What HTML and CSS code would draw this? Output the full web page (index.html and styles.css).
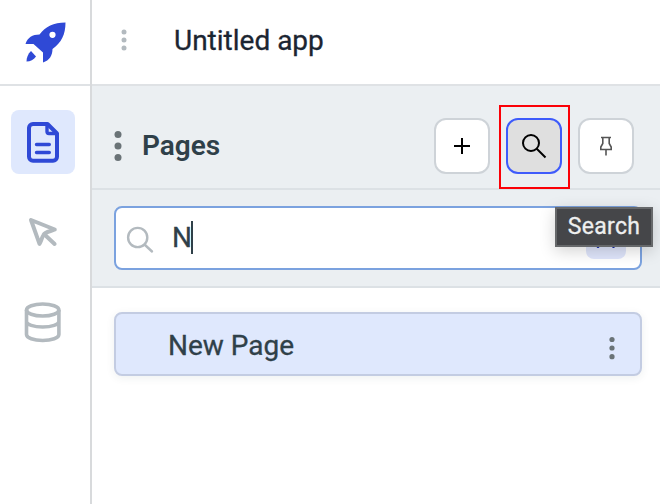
FILE: index.html
```
<!DOCTYPE html>
<html lang="en">
<head>
<meta charset="utf-8">
<title>Untitled app</title>
<link rel="stylesheet" href="styles.css">
</head>
<body>
<div class="app">
  <aside class="sidebar">
    <div class="logo">
      <svg width="42" height="42" viewBox="0.500 0.500 42 42"><path fill="#2f49d6" fill-rule="evenodd" d="M41 1C29 1 21 5 15 13C8 13 3 16 1 22.500H9L18.500 31V41C25 39 28 34 28 27.500C37 21 41 13 41 1ZM28 10.200a3.100 3.100 0 1 1 0 6.200a3.100 3.100 0 0 1 0-6.200Z"/><path fill="#2f49d6" d="M6.500 29.500L11.500 35C9 38.500 6 39.800 2 40C2 36 3.500 32.500 6.500 29.500Z"/></svg>
    </div>
    <nav class="nav">
      <button class="nav-item active" aria-label="Pages">
        <svg width="36" height="44" viewBox="0 0 36 44" fill="none" stroke="#2f49d6" stroke-width="4" stroke-linejoin="round" stroke-linecap="round"><path d="M8 4H22.500L32 13.500V36.700a4 4 0 0 1-4 4H8a4 4 0 0 1-4-4V8a4 4 0 0 1 4-4Z"/><path stroke-width="3.400" d="M22 5V11.500a2 2 0 0 0 2 2H31"/><path stroke-width="3.400" d="M11.500 24.500H24.300M11.500 32.500H24.300"/></svg>
      </button>
      <button class="nav-item" aria-label="Inspector">
        <svg width="36" height="36" viewBox="0 0 36 36" fill="none" stroke="#b3babf" stroke-width="4" stroke-linejoin="round" stroke-linecap="round"><path d="M6 6L29.800 15.500C25 17.500 20 18 18.500 21C16.500 24 16.500 27 14.500 29.800ZM19.500 20.500L29.600 30"/></svg>
      </button>
      <button class="nav-item" aria-label="Sources">
        <svg width="40" height="44" viewBox="0 0 40 44" fill="none" stroke="#b3babf" stroke-width="3.600"><ellipse cx="19.700" cy="10" rx="16.200" ry="6"/><path d="M3.500 10V34.500C3.500 38 10.700 40.500 19.700 40.500S35.900 38 35.900 34.500V10M3.500 21.500C3.500 24.500 10.700 27 19.700 27S35.900 24.500 35.900 21.500"/></svg>
      </button>
    </nav>
  </aside>
  <main class="main">
    <header class="topbar">
      <svg width="8" height="24" viewBox="0 0 8 24" fill="#b3babf"><circle cx="4" cy="4" r="2.500"/><circle cx="4" cy="12" r="2.500"/><circle cx="4" cy="20" r="2.500"/></svg>
      <span class="app-name">Untitled app</span>
    </header>
    <section class="panel-head">
      <svg width="8" height="32" viewBox="0 0 8 32" fill="#6a7377"><circle cx="4" cy="4.500" r="3.500"/><circle cx="4" cy="16" r="3.500"/><circle cx="4" cy="27.500" r="3.500"/></svg>
      <h1 class="panel-title">Pages</h1>
      <div class="actions">
        <button class="action" aria-label="Add"><svg width="16" height="16" viewBox="0 0 16 16" fill="none" stroke="#000" stroke-width="2"><path d="M8 0V16M0 8H16"/></svg></button>
        <div class="action-wrap">
          <button class="action selected" aria-label="Find"><svg width="26" height="26" viewBox="0 0 26 26" fill="none" stroke="#000" stroke-width="2"><circle cx="10" cy="10" r="8"/><path d="M15.500 15.500L24.500 24.500"/></svg></button>
          <div class="highlight"></div>
          <div class="tooltip">Search</div>
        </div>
        <button class="action" aria-label="Pin"><svg width="14" height="20" viewBox="0 0 14 20" fill="none" stroke="#555" stroke-width="1.600"><path d="M2 1.500H12M3.800 1.500V7.500L1.800 11V13.500H12.200V11L10.200 7.500V1.500M7 13.500V19.500"/></svg></button>
      </div>
    </section>
    <section class="search-row">
      <div class="search-box">
        <svg width="28" height="28" viewBox="0 0 28 28" fill="none" stroke="#b3babf" stroke-width="2.400" stroke-linecap="round"><circle cx="11.700" cy="11.500" r="9.600"/><path d="M18.500 18.500L26 25.500"/></svg>
        <span class="query">N</span><span class="caret"></span>
        <button class="clear" aria-label="Clear"><svg width="20" height="20" viewBox="0 0 20 20" fill="none" stroke="#1527a8" stroke-width="3" stroke-linecap="round"><path d="M2 2L17.500 17.500M17.500 2L2 17.500"/></svg></button>
      </div>
    </section>
    <section class="list">
      <div class="page-item">
        <span>New Page</span>
        <svg width="8" height="24" viewBox="0 0 8 24" fill="#6a7377"><circle cx="4" cy="3.500" r="2.600"/><circle cx="4" cy="12" r="2.600"/><circle cx="4" cy="20.700" r="2.600"/></svg>
      </div>
    </section>
  </main>
</div>
</body>
</html>
```
FILE: styles.css
```
* { box-sizing: border-box; }
body { margin: 0; font-family: Roboto, "Liberation Sans", sans-serif; font-size: 28px; color: #2f4049; background: #fff; }
button { padding: 0; border: 0; background: none; font: inherit; }
svg { display: block; flex: none; }
.app { display: flex; width: 660px; height: 504px; overflow: hidden; }
.sidebar { width: 92px; border-right: 2px solid #d8dadc; flex: none; }
.logo { height: 86px; padding: 22px 0 0 25px; border-bottom: 2px solid #dfe2e5; }
.nav { display: flex; flex-direction: column; gap: 26px; padding: 24px 0 0 11px; }
.nav-item { display: flex; align-items: center; justify-content: center; width: 64px; height: 64px; border-radius: 8px; }
.nav-item.active { background: #dfe8fd; }
.main { flex: 1; min-width: 0; }
.topbar { display: flex; align-items: center; height: 86px; padding: 0 28px 4px; border-bottom: 2px solid #dfe2e5; }
.app-name { margin-left: 46px; padding-top: 2px; color: #1b2532; line-height: 32px; -webkit-text-stroke: .3px; }
.panel-head { display: flex; align-items: center; height: 104px; padding: 18px 26px 0 22px; background: #ebeff2; border-bottom: 2px solid #dce1e5; }
.panel-title { margin: 0 0 0 20px; font-size: 28px; font-weight: 600; line-height: 32px; }
.actions { display: flex; gap: 16px; margin-left: auto; }
.action { display: flex; align-items: center; justify-content: center; width: 56px; height: 56px; border: 2px solid #ced3d8; border-radius: 12px; background: #fff; }
.action-wrap { position: relative; }
.action.selected { background: #dfdfdf; border-color: #3e5bfb; }
.highlight { position: absolute; left: -7px; top: -13px; width: 71px; height: 84px; border: 2px solid #fb0007; }
.tooltip { position: absolute; z-index: 2; left: 49px; top: 89px; width: 98px; height: 40px; border: 2px solid #66686a; background: #454649; color: #eeefef; font-size: 23px; line-height: 35px; letter-spacing: .3px; text-align: center; box-shadow: 0 4px 16px rgba(0,0,0,.18); -webkit-text-stroke: .3px; }
.search-row { height: 98px; padding: 16px 18px 0 22px; background: #ebeff2; border-bottom: 2px solid #dce1e5; }
.search-box { display: flex; align-items: center; height: 64px; padding: 4px 14px 0 10px; border: 2px solid #7ba2df; border-radius: 8px; background: #fff; }
.query { margin-left: 18px; line-height: 32px; padding-bottom: 5px; -webkit-text-stroke: .3px; }
.caret { width: 2px; height: 33px; margin: 0 0 5px -1px; background: #2f4049; }
.clear { display: flex; align-items: center; justify-content: center; width: 40px; height: 40px; margin-left: auto; margin-bottom: 3px; border-radius: 8px; background: #dfe5fb; }
.list { padding: 24px 18px 0 22px; }
.page-item { display: flex; align-items: center; justify-content: space-between; height: 64px; padding: 0 24px 0 52px; border: 2px solid #c3cce2; border-radius: 8px; background: #dfe8fd; box-shadow: 0 2px 8px rgba(40,60,60,.08); }
.page-item span { padding-top: 3px; line-height: 32px; -webkit-text-stroke: .3px; }
.page-item svg { margin-top: 8px; }
```
